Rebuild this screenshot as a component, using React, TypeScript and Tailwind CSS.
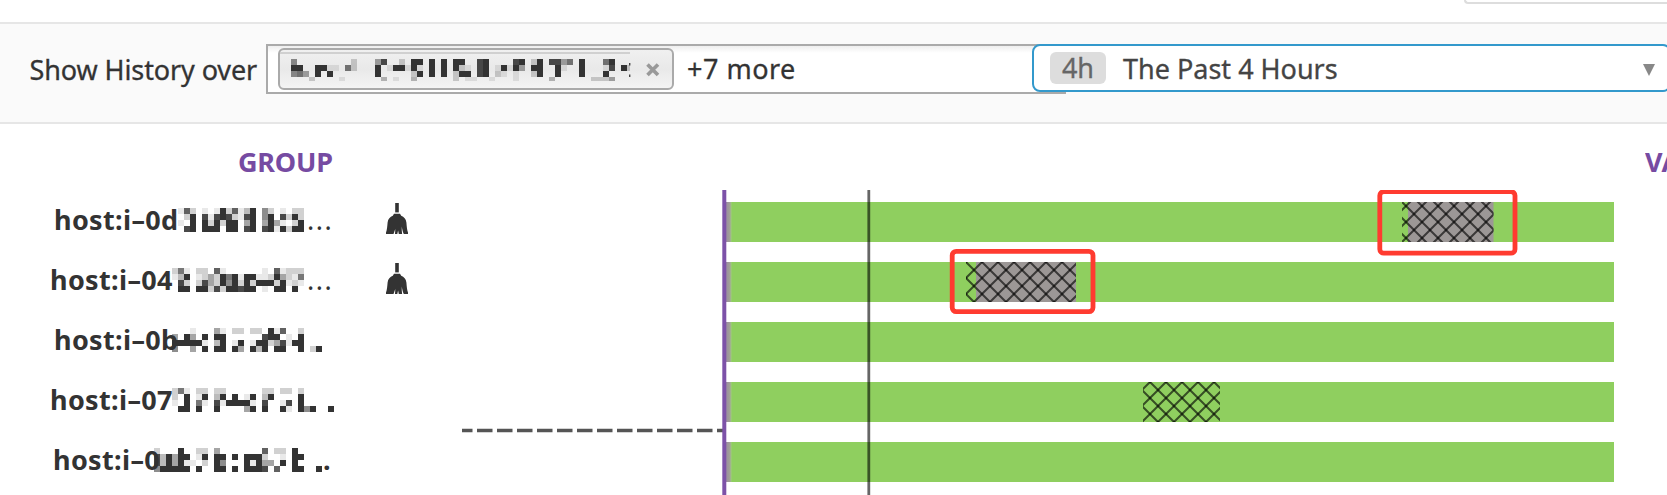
const MASK_TAG = [
  "500000000020004800209909090990089000089029088460900069000",
  "990099110620009019919109090921089019194099009100900018092",
  "564090900000009000002909090299089021010029009000900090000",
  "000200001000000301003000000201100100010000030000002224000",
];

const HOSTS = [
  {
    prefix: "host:i–0d", left: "pl-[54px]", maskLeft: 178, tail: "...", tailLeft: 307, tailStyle: "font-normal", broom: true,
    mask: ["172010192713905201022", "029081898218905908292", "109092929904904941029", "089099909908908919299"],
  },
  {
    prefix: "host:i–04", left: "pl-[50px]", maskLeft: 172, tail: "...", tailLeft: 307, tailStyle: "font-normal", broom: true,
    mask: ["2610220710000001071222", "1390124296919911294216", "0820284295929299929121", "0990992829989901099090"],
  },
  {
    prefix: "host:i–0b", left: "pl-[54px]", maskLeft: 172, tail: "", tailLeft: 0, tailStyle: "", broom: false,
    mask: ["0001000410220220917002000", "4094090990000008990109000", "9999910390190199248199000", "5004090990940939099009029"],
  },
  {
    prefix: "host:i–07", left: "pl-[50px]", maskLeft: 172, tail: "", tailLeft: 0, tailStyle: "", broom: false,
    mask: ["261022022000000220220200000", "209019039090190390000900000", "109061081999910800180900000", "099090090000490900910959009"],
  },
  {
    prefix: "host:i–0", left: "pl-[53px]", maskLeft: 154, tail: ".", tailLeft: 323, tailStyle: "font-bold", broom: false,
    mask: ["2000900220400000007022090000", "8394990190990909992001099000", "8394911020950009194409090000", "5999990900990909998070099009"],
  },
];

function Mask({ rows, lastHeight = 6 }: { rows: string[]; lastHeight?: number }) {
  return (
    <svg width={rows[0].length * 6} height={18 + lastHeight} className="block shrink-0">
      {rows.map((row, y) =>
        row.split("").map((d, x) =>
          d === "0" ? null : (
            <rect key={`${x}-${y}`} x={x * 6} y={y * 6} width={6} height={y === 3 ? lastHeight : 6} fill="#333" opacity={Number(d) / 9} />
          )
        )
      )}
    </svg>
  );
}

function Broom() {
  return (
    <svg width="22" height="32" viewBox="0 0 22 32" fill="#333" className="block">
      <rect x="9.2" y="0" width="3.6" height="9.4" />
      <path d="M8 10.800h6l1.200 2c2.700.9 4.800 3.300 5.200 6.600.3 3.800.6 7.700 1.600 10.200V31h-4.200c-.9-2-1.600-4.700-2-7.600-.1 2.600-.1 5 .3 7.600h-3.300l-.7-3.600-.8 3.600H9l.3-5-1.800 5H0v-1.400c1-2.500 1.300-6.400 1.600-10.200.4-3.300 2.500-5.700 5.200-6.600z" />
    </svg>
  );
}

const BAR_TOPS = [202, 262, 322, 382, 442];

function Timeline() {
  return (
    <svg width="1152" height="305" viewBox="462 190 1152 305" className="block shrink-0">
      <defs>
        <pattern id="hatch" x="6" y="6" width="16" height="16" patternUnits="userSpaceOnUse">
          <g stroke="#000" strokeOpacity=".62" strokeWidth="2">
            <path d="M-2-2 18 18M-2 14 2 18M14-2 18 2" />
            <path d="M-2 18 18-2M-2 2 2-2M14 18 18 14" />
          </g>
        </pattern>
        <linearGradient id="edge">
          <stop offset="0" stopColor="#9a8fa0" />
          <stop offset=".6" stopColor="#a09c98" />
          <stop offset="1" stopColor="#a3c586" />
        </linearGradient>
      </defs>
      <line x1="457" x2="723" y1="430.500" y2="430.500" stroke="#555" strokeWidth="3.400" strokeDasharray="15.500 4.500" />
      {BAR_TOPS.map((y) => (
        <g key={y}>
          <rect x="726" y={y} width="888" height="40" fill="#8fcf5f" />
          <rect x="726" y={y} width="5.500" height="40" fill="url(#edge)" />
        </g>
      ))}
      <rect x="1408" y="202" width="85.500" height="40" fill="#9c9796" />
      <rect x="1402" y="202" width="91.500" height="40" fill="url(#hatch)" />
      <rect x="976" y="262" width="100" height="40" fill="#9c9796" />
      <rect x="966" y="262" width="110" height="40" fill="url(#hatch)" />
      <rect x="1143" y="382" width="77" height="40" fill="url(#hatch)" />
      <rect x="722.300" y="190" width="4" height="305" fill="#7d52a8" />
      <rect x="867.400" y="190" width="2.800" height="305" fill="#000" opacity=".6" />
      <g fill="none" stroke="#ff3b30" strokeWidth="4.800">
        <rect x="1379.800" y="191.600" width="135.200" height="61.600" rx="4" />
        <rect x="952.200" y="251.400" width="140.800" height="60.200" rx="4" />
      </g>
    </svg>
  );
}

export default function App() {
  return (
    <div className="flex h-[495px] w-[1667px] flex-col overflow-hidden bg-white font-['Noto_Sans',sans-serif] text-[27px] leading-[40px] text-[#333]">
      <div className="flex h-[22px] justify-end">
        <div className="h-1 w-[203px] rounded-bl-[6px] border-b-2 border-l-2 border-[#ddd]" />
      </div>

      <header className="flex h-[102px] shrink-0 items-start border-y-2 border-[#e6e6e6] bg-[#fafafa] pt-5 [-webkit-text-stroke:0.3px]">
        <div className="w-[266px] shrink-0 whitespace-nowrap pl-[29.5px] pt-[6px] tracking-[-0.1px]">Show History over</div>
        <div className="flex h-[50px] w-[800px] shrink-0 border-2 border-[#aaa] bg-white bg-linear-to-b from-[#eee] to-white to-15% pl-[10px] pt-[2px]">
          <div className="flex h-[42px] w-[396px] shrink-0 rounded-[6px] border-2 border-[#aaa] bg-linear-to-b from-[#f0f0f0] via-[#e9e9e9] via-50% to-[#f4f4f4]">
            <div className="mt-[2px] flex h-[34px] w-[350px] shrink-0 overflow-hidden border-t-2 border-[#d0d0d0] pl-[11px] pt-[5px]">
              <Mask rows={MASK_TAG} lastHeight={4} />
            </div>
            <svg width="2" height="16" viewBox="0 0 2 16" className="-ml-[1px] mt-[13px] shrink-0" fill="#444">
              <path d="M0 0h1.400v2.500H0zM0 11.500h1.400V14H0z" />
            </svg>
            <svg width="14" height="14" viewBox="0 0 14 14" className="ml-[15px] mt-[13px]" stroke="#999" strokeWidth="3.600">
              <path d="M1.500 1.500l10.500 10.500M12 1.500l-10.500 10.500" />
            </svg>
          </div>
          <div className="pl-[13px] pt-px tracking-[0.5px]">+7 more</div>
        </div>
        <div className="z-10 -ml-[34px] flex h-12 w-[639px] shrink-0 rounded-[8px] border-2 border-[#3399cc] bg-white pl-4 pt-[6px]">
          <div className="flex h-8 w-14 shrink-0 items-center justify-center rounded-[6px] bg-[#ddd] text-[#666]">4h</div>
          <div className="-mt-[3px] pl-[17px] text-[#444]">The Past 4 Hours</div>
          <svg width="12" height="12" viewBox="0 0 12 12" className="ml-auto mr-[14px] mt-[12px]">
            <path d="M0 0h12L6 12z" fill="#888" />
          </svg>
        </div>
      </header>

      <div className="flex h-[66px] shrink-0 justify-between pt-[18px] font-bold text-[#764ba2]">
        <div className="pl-[238px] tracking-[-0.2px]">GROUP</div>
        <div className="w-[22px] overflow-hidden whitespace-nowrap">VA</div>
      </div>

      <main className="flex h-[305px] overflow-hidden">
        <div className="w-[462px] shrink-0">
          {HOSTS.map((h) => (
            <div key={h.prefix} className={`relative flex h-[60px] pt-[10px] font-bold tracking-[0.35px] ${h.left}`}>
              <span className="whitespace-nowrap">{h.prefix}</span>
              <div className="absolute top-[18px]" style={{ left: h.maskLeft }}>
                <Mask rows={h.mask} />
              </div>
              {h.tail && (
                <span className={`absolute tracking-[1.500px] ${h.tailStyle}`} style={{ left: h.tailLeft }}>
                  {h.tail}
                </span>
              )}
              {h.broom && (
                <div className="absolute left-[386px] top-[13px]">
                  <Broom />
                </div>
              )}
            </div>
          ))}
        </div>
        <Timeline />
      </main>
    </div>
  );
}
